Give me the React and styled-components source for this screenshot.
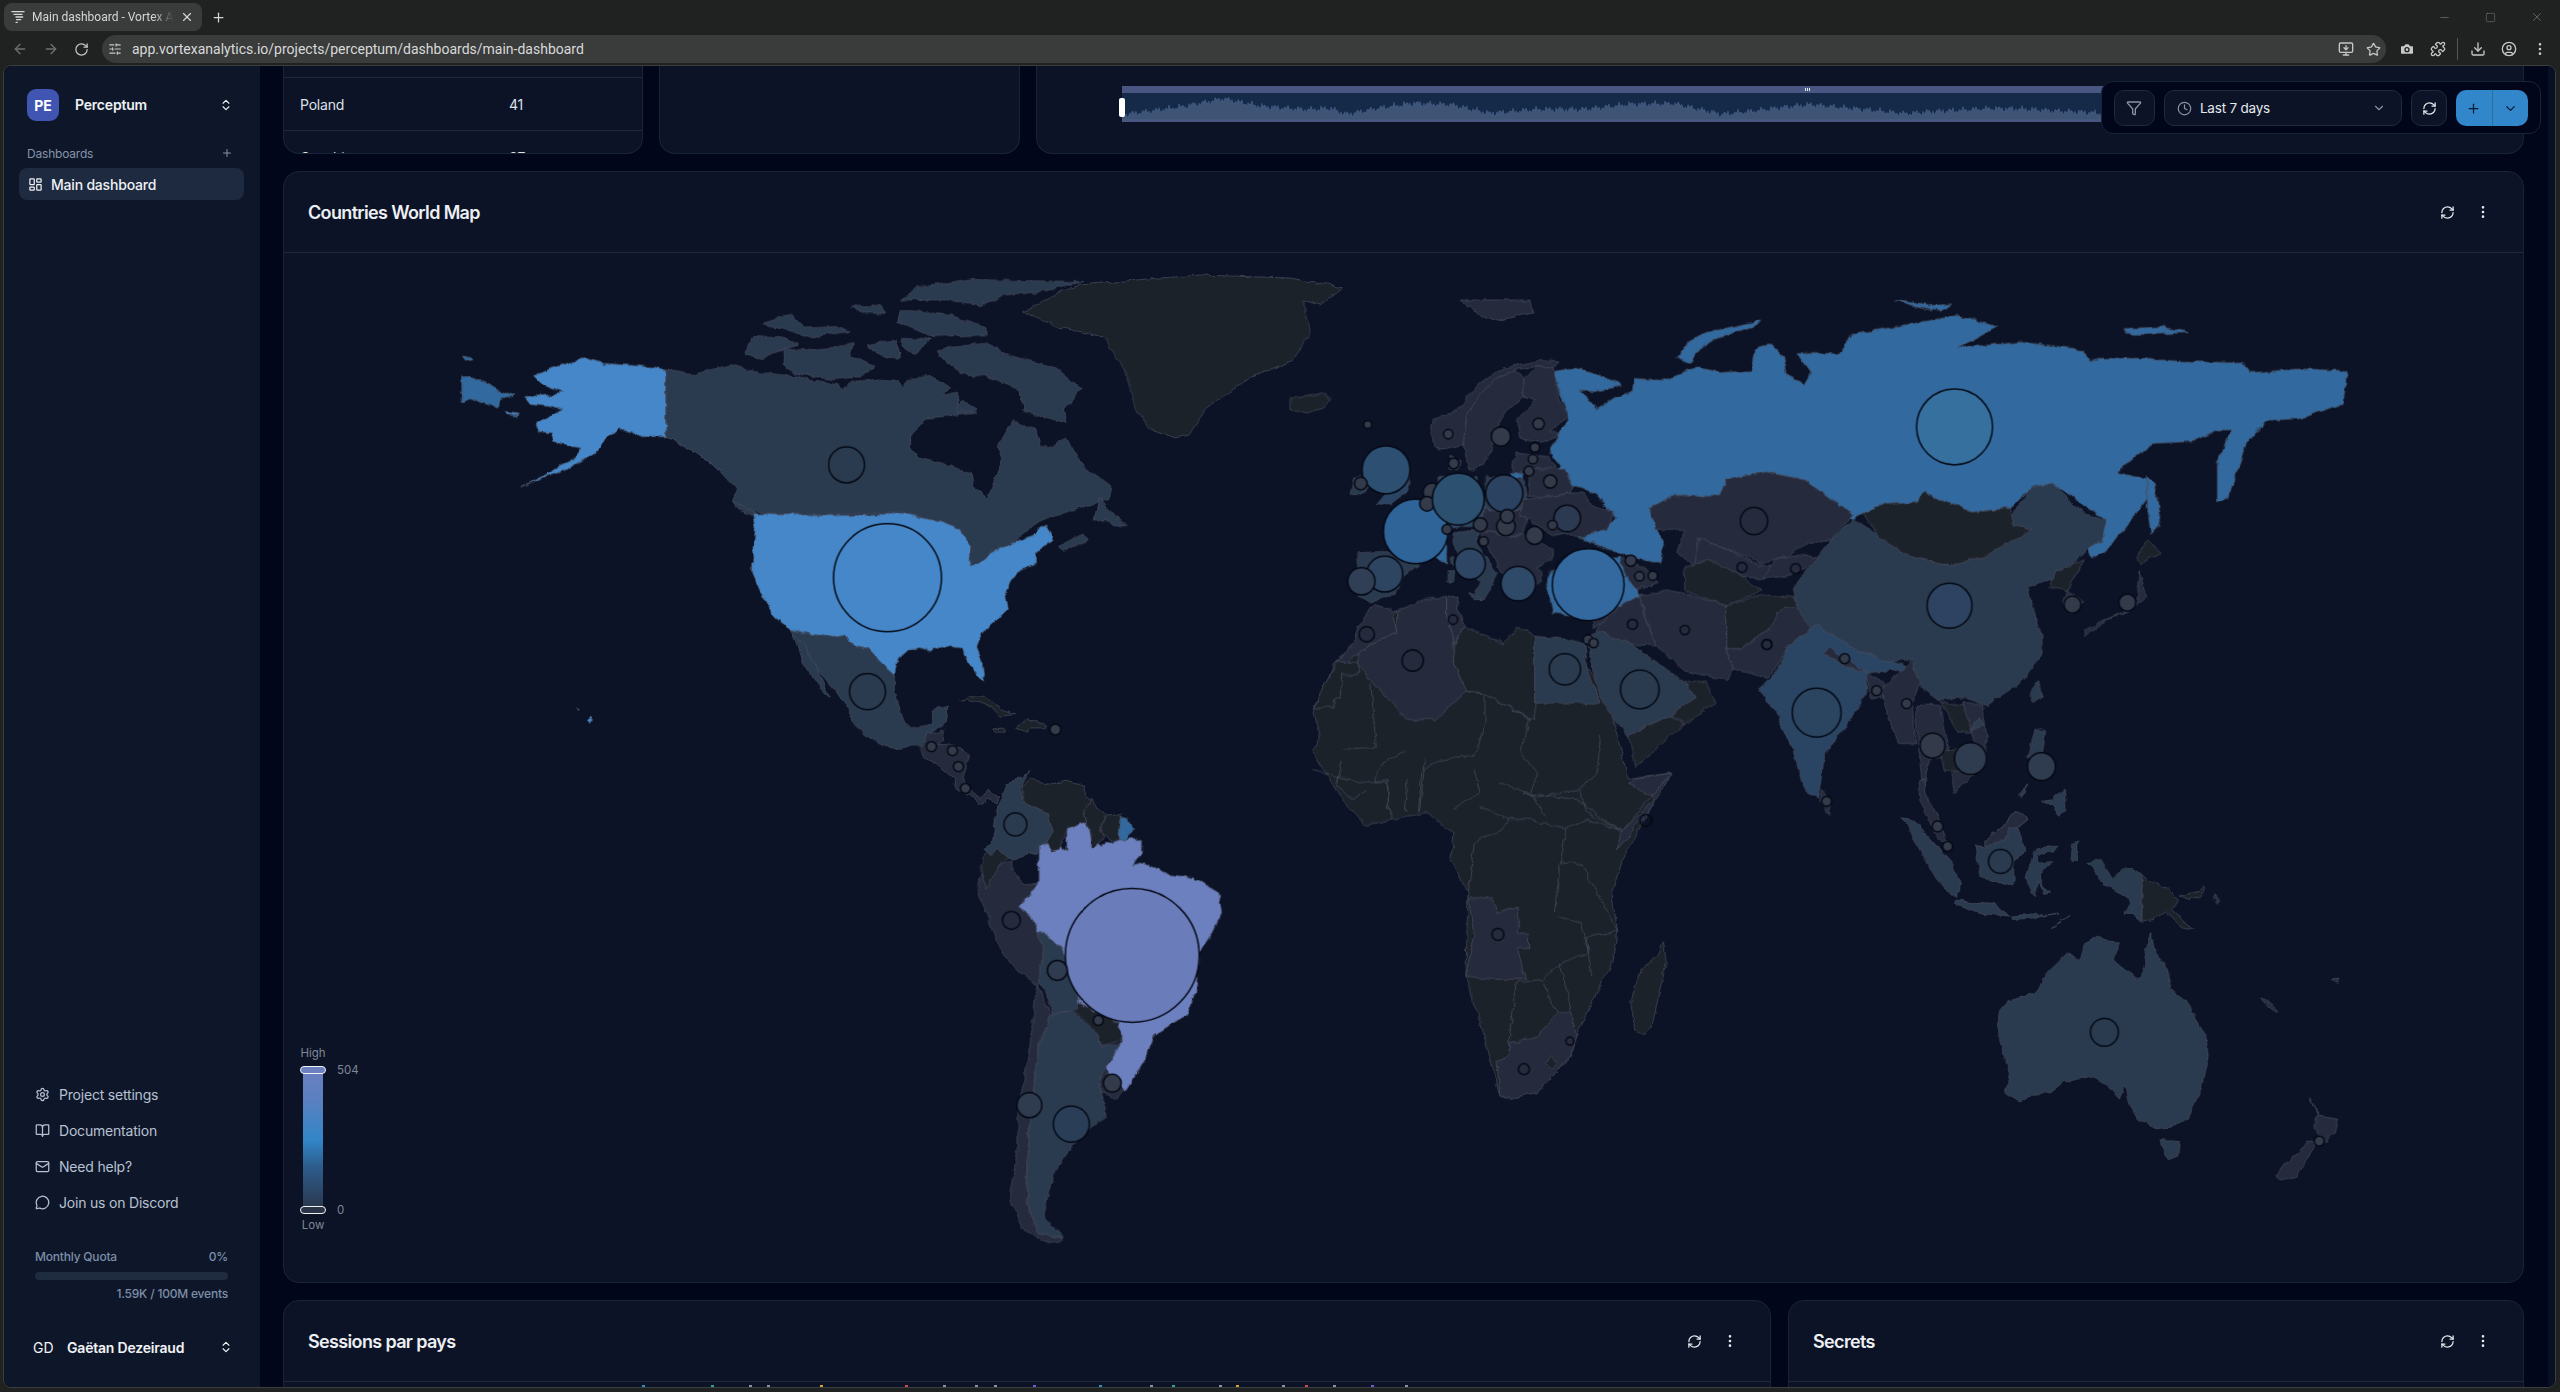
import styled, { createGlobalStyle } from 'styled-components';
import {
  ArrowLeft, ArrowRight, BookOpen, Camera, ChevronDown, ChevronsUpDown, CircleUser, Clock, Download,
  EllipsisVertical, Funnel, LayoutDashboard, Mail, MessageCircle, Minus, MonitorDown, Plus, Puzzle,
  RefreshCw, RotateCw, Settings, SlidersHorizontal, Square, Star, Tornado, X,
} from 'lucide-react';

const GlobalStyle = createGlobalStyle`
  html, body { margin: 0; height: 100%; background: #202221; overflow: hidden; }
  body { font-family: Inter, "Liberation Sans", sans-serif; }
  * { box-sizing: border-box; }
`;

const Page = styled.div`
  height: 100vh;
  display: flex;
  flex-direction: column;
  background: #202221;
`;

/* browser chrome */
const TabStrip = styled.div`
  height: 33px;
  flex: none;
  display: flex;
  align-items: center;
  padding: 1px 0 0 4px;
  color: #d5d6d6;
`;
const Tab = styled.div`
  width: 198px;
  height: 28px;
  background: #3a3b3b;
  border-radius: 8px;
  display: flex;
  align-items: center;
  padding: 0 8px 0 6px;
  gap: 6px;
`;
const TabTitle = styled.span`
  flex: 1;
  font: 12px Roboto, sans-serif;
  white-space: nowrap;
  overflow: hidden;
  -webkit-mask-image: linear-gradient(90deg, #000 85%, transparent);
  mask-image: linear-gradient(90deg, #000 85%, transparent);
`;
const NewTab = styled.div`
  margin-left: 9px;
  display: flex;
`;
const WindowControls = styled.div`
  margin-left: auto;
  padding-right: 16px;
  display: flex;
  align-items: center;
  gap: 34px;
  color: #8b8d8d;
`;
const Toolbar = styled.div`
  height: 32px;
  flex: none;
  display: flex;
  align-items: center;
  padding-left: 12px;
  color: #c6c7c7;
`;
const NavIcon = styled.div`
  display: flex;
  flex: none;
  margin-right: ${p => p.$gap ?? 15}px;
  color: ${p => (p.$dim ? '#6d6f6f' : '#c6c7c7')};
`;
const Omnibox = styled.div`
  width: 2284px;
  flex: none;
  height: 28px;
  margin-right: 13px;
  background: #3a3b3b;
  border-radius: 14px;
  display: flex;
  align-items: center;
  padding: 0 5px 0 6px;
  gap: 10px;
`;
const Url = styled.span`
  flex: 1;
  font: 14px Roboto, sans-serif;
  color: #d8d9d9;
`;
const OmniAction = styled.div`
  display: flex;
  margin-left: 2px;
`;
const ToolbarSep = styled.div`
  width: 1px;
  flex: none;
  height: 22px;
  background: #555757;
  margin: 0 12px 0 -4px;
`;

/* app window */
const AppWindow = styled.div`
  flex: 1;
  min-height: 0;
  margin: 0 4px 4px 3px;
  border: 1px solid #3b3d3f;
  border-radius: 8px;
  overflow: hidden;
  display: flex;
  background: #02061a;
`;

const Sidebar = styled.aside`
  width: 256px;
  flex: none;
  background: #0e1729;
  padding: 23px 27px 24px 23px;
  display: flex;
  flex-direction: column;
`;
const OrgRow = styled.div`
  display: flex;
  align-items: center;
  height: 32px;
  color: #eef1f5;
`;
const OrgAvatar = styled.div`
  width: 32px;
  height: 32px;
  border-radius: 9px;
  background: #4054b2;
  color: #fff;
  font-weight: 700;
  font-size: 14px;
  display: flex;
  align-items: center;
  justify-content: center;
`;
const OrgName = styled.span`
  flex: 1;
  margin-left: 16px;
  font-size: 14px;
  font-weight: 600;
  letter-spacing: -0.2px;
  position: relative;
  top: -1px;
`;
const SectionHead = styled.div`
  margin-top: 24px;
  height: 16px;
  display: flex;
  align-items: center;
  justify-content: space-between;
  font-size: 12px;
  color: #8493a9;
  letter-spacing: -0.2px;
`;
const NavItem = styled.div`
  margin: 7px -11px 0 -8px;
  height: 32px;
  border-radius: 8px;
  background: #1d2a3f;
  display: flex;
  align-items: center;
  gap: 8px;
  padding-left: 9px;
  font-size: 14px;
  font-weight: 500;
  letter-spacing: -0.2px;
  color: #eef1f5;
`;
const Links = styled.div`
  margin-top: auto;
  display: flex;
  flex-direction: column;
`;
const LinkRow = styled.div`
  height: 36px;
  padding-left: 8px;
  display: flex;
  align-items: center;
  gap: 9px;
  font-size: 14px;
  letter-spacing: -0.2px;
  color: #b7c1d1;
`;
const Quota = styled.div`
  margin: 28px 5px 0 8px;
  font-size: 12px;
  font-weight: 500;
  letter-spacing: -0.2px;
  color: #7d8ea8;
`;
const QuotaHead = styled.div`
  height: 16px;
  display: flex;
  justify-content: space-between;
  align-items: center;
`;
const QuotaBar = styled.div`
  height: 8px;
  margin-top: 8px;
  border-radius: 4px;
  background: #1f2b3e;
`;
const QuotaFoot = styled.div`
  margin-top: 6px;
  height: 16px;
  line-height: 16px;
  text-align: right;
`;
const UserRow = styled.div`
  margin-top: 29px;
  height: 32px;
  padding-left: 6px;
  display: flex;
  align-items: center;
  color: #f1f3f6;
`;
const UserInitials = styled.span`
  width: 34px;
  font-size: 14px;
`;
const UserName = styled.span`
  flex: 1;
  font-size: 14px;
  font-weight: 600;
  letter-spacing: -0.2px;
`;

const Main = styled.main`
  flex: 1;
  min-width: 0;
  position: relative;
  overflow: hidden;
  padding: 0 24px 0 23px;
  display: flex;
  flex-direction: column;
  gap: 17px;
`;
const ScrollRail = styled.div`
  width: 7px;
  flex: none;
  background: #0a1024;
`;

const Card = styled.section`
  background: #0c1326;
  border: 1px solid #1a2438;
  border-radius: 16px;
  overflow: hidden;
`;
const TopRow = styled.div`
  height: 88px;
  flex: none;
  display: grid;
  grid-template-columns: 360px 361px 1488px;
  gap: 16px;
`;
const TopCard = styled(Card)`
  border-top: 0;
  border-radius: 0 0 16px 16px;
`;
const TableTop = styled.div`
  height: 12px;
  border-bottom: 1px solid #1f2a3e;
`;
const TableRow = styled.div`
  height: 53px;
  padding: 0 0 0 16px;
  display: grid;
  grid-template-columns: 209px 1fr;
  align-items: center;
  font-size: 14px;
  letter-spacing: -0.2px;
  color: #dce1e9;
  border-bottom: 1px solid #1f2a3e;
`;
const Brush = styled.div`
  position: relative;
  margin: 20px 0 0 85px;
  height: 36px;
`;
const BrushHandle = styled.div`
  position: absolute;
  left: -3px;
  top: 12px;
  width: 6px;
  height: 19px;
  border-radius: 2px;
  background: #fff;
`;
const WorldCard = styled(Card)`
  height: 1112px;
  flex: none;
  display: flex;
  flex-direction: column;
`;
const CardHead = styled.header`
  height: 81px;
  flex: none;
  display: flex;
  align-items: center;
  padding: 0 32px 0 24px;
  gap: 20px;
  border-bottom: 1px solid #1f2a3e;
  color: #e6e9ee;
`;
const CardTitle = styled.h2`
  flex: 1;
  margin: 0;
  font-size: 18px;
  font-weight: 600;
  letter-spacing: -0.65px;
  color: #eceff3;
`;
const MapBody = styled.div`
  position: relative;
  flex: 1;
  min-height: 0;
`;
const MapSvg = styled.svg`
  display: block;
  width: 100%;
  height: 100%;
  polygon, polyline {
    vector-effect: non-scaling-stroke;
    stroke: #4a5060;
    stroke-width: 0.7px;
    stroke-linejoin: round;
  }
  polyline { fill: none; }
  circle {
    vector-effect: non-scaling-stroke;
    stroke: #050914;
    stroke-width: 1.5px;
  }
`;
const Legend = styled.div`
  position: absolute;
  left: 14px;
  top: 793px;
  width: 70px;
  display: flex;
  flex-direction: column;
  font-size: 11.5px;
  color: #7e8796;
`;
const LegendLabel = styled.div`
  width: 30px;
  height: 14px;
  line-height: 14px;
  text-align: center;
`;
const LegendBar = styled.div`
  position: relative;
  width: 20px;
  height: 146px;
  margin: 7px 0 5px 5px;
  background: linear-gradient(#6c80c0 0%, #5b80c0 22%, #3286c8 50%, #2d5d8d 68%, #2b3347 100%);
`;
const LegendThumb = styled.div`
  position: absolute;
  left: -3px;
  ${p => (p.$top ? 'top: -1px;' : 'bottom: -1px;')}
  width: 26px;
  height: 8px;
  border: 1.5px solid #f1f3f6;
  border-radius: 4px;
  background: ${p => (p.$top ? '#6c80c0' : '#2b3347')};
`;
const LegendValue = styled.span`
  position: absolute;
  left: 34px;
  ${p => (p.$top ? 'top: -4px;' : 'bottom: -4px;')}
`;
const BottomRow = styled.div`
  display: grid;
  flex: none;
  grid-template-columns: 1488px 736px;
  gap: 17px;
`;
const BottomCard = styled(Card)`
  height: 200px;
`;
const ClippedChart = styled.svg`
  display: block;
`;
const FilterBar = styled.div`
  position: absolute;
  top: 15px;
  right: 7px;
  width: 440px;
  height: 53px;
  padding: 8px 12px;
  display: flex;
  gap: 9px;
  background: #02061a;
  border: 1px solid #1a2438;
  border-radius: 12px;
  color: #aab2bf;
`;
const GhostButton = styled.div`
  width: ${p => p.$w}px;
  height: 36px;
  display: flex;
  align-items: center;
  justify-content: center;
  background: #0c1326;
  border: 1px solid #1f2a3e;
  border-radius: 10px;
  color: ${p => (p.$light ? '#e6e9ee' : '#8a92a0')};
`;
const RangeSelect = styled.div`
  width: 239px;
  height: 36px;
  padding: 0 15px 0 12px;
  display: flex;
  align-items: center;
  gap: 8px;
  background: #0c1326;
  border: 1px solid #1f2a3e;
  border-radius: 10px;
  color: #8a92a0;
`;
const RangeText = styled.span`
  flex: 1;
  font-size: 13.5px;
  letter-spacing: -0.2px;
  color: #e6e9ee;
`;
const SplitButton = styled.div`
  width: 72px;
  height: 36px;
  display: flex;
  border-radius: 10px;
  overflow: hidden;
  background: #3286ca;
  color: #0a1a30;
`;
const SplitPart = styled.div`
  flex: 1;
  display: flex;
  align-items: center;
  justify-content: center;
  & + & { border-left: 1px solid #2a6ea6; }
`;

/* map data, traced in the pixel grid of a crop and placed back with a transform */
const COLORS = {
  none: '#1e222b',
  low: '#262b3d',
  mid: '#2b3a50',
  ind: '#2c4563',
  ru: '#33699f',
  us: '#4587c9',
  br: '#6c80c0',
};

const NORTH_AMERICA = [
  ['us', '520,360 500,352 440,345 395,340 360,325 325,340 295,355 260,378 275,400 300,415 320,428 295,435 245,440 258,465 290,470 315,480 290,498 265,520 270,545 295,550 300,575 330,590 355,595 340,625 300,660 275,680 235,712 285,680 330,655 380,610 410,560 425,540 450,545 470,560 520,565 545,580 570,600 600,630 630,670 633,645 600,600 575,570 540,560 520,555'],
  ['ru', '119,375 160,395 190,420 222,438 195,450 190,472 160,460 140,445 120,458'],
  ['ru', '119,322 135,322 145,330 125,335'],
  ['us', '370,1400 378,1410 372,1422 365,1412'],
  ['us', '345,1375 352,1378 350,1385'],
  ['us', '205,488 232,492 230,498 210,496'],
  ['mid', '520,360 570,375 610,358 650,345 680,358 720,370 780,380 810,395 860,405 865,425 880,395 930,390 970,395 985,410 1000,385 1040,380 1080,410 1065,440 1090,430 1095,470 1130,490 1065,500 1030,505 1000,560 1000,590 1015,625 1060,640 1120,670 1125,710 1150,750 1165,690 1180,630 1170,590 1200,515 1245,540 1255,590 1280,590 1305,560 1340,650 1395,710 1390,745 1350,765 1310,785 1250,815 1205,875 1165,905 1130,940 1115,945 1120,890 1095,840 1060,815 1025,805 990,790 710,793 680,780 650,755 660,720 640,690 630,670 600,630 570,600 545,580 520,565'],
  ['mid', '1090,290 1150,280 1200,320 1280,350 1335,420 1300,480 1305,520 1260,500 1220,480 1215,420 1160,385 1120,375 1095,370 1050,300'],
  ['mid', '750,300 800,300 860,290 890,280 880,320 930,350 900,380 850,390 770,370 750,340'],
  ['mid', '690,260 750,265 780,285 730,310 710,330 675,310'],
  ['mid', '1030,110 1120,90 1340,95 1250,125 1180,140 1140,165 1070,150 980,150 1010,115'],
  ['mid', '980,180 1060,190 1150,235 1150,255 1040,260 975,215'],
  ['mid', '710,220 770,195 790,235 860,230 880,245 800,262 760,240'],
  ['mid', '885,165 940,170 950,190 900,190'],
  ['mid', '980,265 1040,270 1010,310 985,300'],
  ['mid', '915,285 970,270 980,320 950,325'],
  ['mid', '1100,450 1130,480 1090,490'],
  ['mid', '1370,740 1395,790 1425,830 1400,825 1380,810 1360,815'],
  ['mid', '1290,890 1340,850 1350,870 1300,905'],
  ['mid', '650,755 690,780 700,805 670,785'],
  ['us', '690,795 990,793 1025,805 1060,815 1095,840 1120,890 1115,945 1130,940 1165,905 1205,878 1240,860 1255,830 1270,830 1280,875 1245,905 1245,945 1210,965 1195,1000 1185,1040 1190,1080 1170,1110 1140,1150 1130,1190 1140,1240 1145,1295 1135,1290 1115,1240 1100,1195 1060,1190 1040,1205 1005,1195 975,1225 968,1278 940,1240 915,1200 890,1190 870,1160 855,1165 820,1162 790,1150 765,1140 735,1105 710,1040 690,970 690,905 695,840'],
  ['mid', '765,1140 790,1150 855,1165 870,1160 890,1190 915,1200 940,1240 968,1278 968,1330 985,1410 1000,1435 1040,1425 1045,1380 1075,1370 1070,1420 1040,1450 1040,1470 1030,1490 1000,1490 980,1500 950,1490 910,1460 885,1420 880,1380 850,1320 800,1230'],
  ['mid', '770,1150 790,1180 810,1240 843,1340 820,1310 790,1240'],
];

const CARIBBEAN = [
  ['low', '430,255 440,220 478,220 490,205 485,245 470,255 510,255 545,262 565,285 555,330 545,365 570,395 600,415 625,392 655,415 650,430 620,415 605,438 575,415 555,405 525,385 520,355 470,312 430,295 420,270'],
  ['none', '540,130 570,108 610,110 660,145 705,165 655,170 640,150 600,130 560,122'],
  ['none', '705,205 740,178 795,195 790,205 745,205 742,218'],
  ['none', '640,208 670,205 672,217 650,218'],
  ['mid', '745,333 725,355 680,370 665,420 650,440 635,555 610,570 630,585 655,570 690,600 770,580 770,560 800,550 815,520 805,465 730,430 720,390'],
  ['none', '750,355 790,375 860,365 910,380 915,410 935,425 910,460 920,490 860,510 840,570 815,575 800,550 815,520 805,465 730,430 725,385'],
  ['none', '935,415 950,445 975,470 960,510 970,540 935,565 930,510 920,490 910,460'],
  ['none', '975,470 1020,465 1017,540 990,545 960,520'],
  ['ru', '1020,470 1040,480 1060,510 1035,545 1017,540'],
];

const SOUTH_AND_AFRICA = [
  ['br', '325,215 335,270 350,290 380,270 420,270 420,310 405,350 425,340 470,375 510,385 555,430 560,490 540,560 520,610 515,730 500,795 440,860 430,920 390,1030 355,950 385,880 380,820 345,790 310,760 305,680 280,600 250,550 235,550 230,510 205,470 220,410 240,400 240,285 265,280 290,300 290,235'],
  ['low', '140,370 190,335 210,400 240,405 205,470 230,510 240,550 250,600 248,700 238,705 200,655 170,590 145,470 135,425'],
  ['none', '145,315 175,295 190,320 170,350 150,420 140,360'],
  ['mid', '240,555 250,550 280,600 305,680 310,755 310,780 265,795 250,720 240,690 250,600'],
  ['none', '310,760 345,790 380,820 385,870 350,895 345,860 305,785'],
  ['low', '352,955 390,1020 375,1050 345,1030'],
  ['low', '238,705 262,795 240,900 225,1130 220,1350 240,1450 285,1470 260,1485 210,1440 190,1340 205,1200 205,1090 225,900'],
  ['mid', '262,795 300,785 345,860 350,895 385,880 360,950 345,1000 360,1100 330,1135 295,1200 265,1280 250,1400 285,1470 240,1450 220,1350 225,1130 240,900'],
];

const AFRICA_SOUTH = [
  ['low', '990,445 1030,445 1040,490 1075,470 1078,550 1095,555 1095,595 1075,595 1090,690 1030,690 985,680 1000,560'],
  ['low', '1060,880 1075,880 1110,860 1145,790 1170,790 1178,860 1170,920 1110,1030 1060,1048 1045,1040 1040,940 1060,920'],
  ['none', '1135,922 1146,940 1135,962 1126,945'],
  ['low', '1345,70 1310,170 1250,300 1255,250 1315,150 1270,100 1280,90'],
  ['none', '1330,575 1335,640 1310,830 1295,857 1280,840 1273,760 1290,660 1320,620'],
];
const AFRICA_SOUTH_BORDERS = [
  '850,90 850,180', '885,90 880,190', '915,30 905,180', '965,180 1010,130 1000,60',
  '1010,170 1060,210 1050,240 1000,280 990,430', '1060,210 1100,210 1160,240 1200,210 1255,245',
  '1160,240 1150,340 1140,490', '1185,340 1250,545', '1150,340 1190,345', '1250,545 1195,565 1205,680',
  '1145,500 1185,520 1200,610 1155,640 1120,690 1075,700 1060,880', '1150,640 1170,790', '1120,700 1145,790',
  '1085,130 1180,150 1250,240', '770,30 760,110 790,150 810,120', '720,60 800,100 850,90',
];

const AFRICA_OUTLINE = '1334,664 1313,709 1320,736 1313,753 1338,794 1366,826 1405,817 1428,813 1445,827 1454,833 1451,860 1468,893 1466,977 1486,1043 1500,1097 1509,1099 1537,1093 1572,1057 1576,1037 1612,963 1618,933 1612,893 1622,863 1652,807 1672,773 1629,780 1621,750 1605,690 1590,670 1535,675 1500,640 1480,640 1415,620 1400,640 1400,610 1375,625';

const NORTH_AFRICA = [
  ['low', '250,705 305,720 320,790 270,810 205,850 170,880 140,878 185,830 205,770'],
  ['low', '320,725 400,690 470,680 470,740 490,800 490,880 530,965 440,1050 350,1050 205,890 205,850 270,810 320,790'],
  ['low', '470,680 505,680 500,720 525,770 495,825 490,800 470,740'],
  ['none', '525,770 590,800 640,825 680,770 735,800 735,1050 575,970 530,965 490,880 495,825'],
  ['mid', '735,800 850,810 885,820 890,870 880,860 930,1000 735,1000'],
  ['none', '140,878 205,878 205,915 155,915 150,985 135,985 130,1015 72,1015 95,960'],
];

const EUROPE = [
  ['low', '700,80 740,90 720,110 680,150 690,205 760,215 810,195 780,180 835,145 810,90 795,20 790,-5 745,-10 705,25'],
  ['low', '705,25 700,80 650,120 620,170 610,230 580,285 540,300 520,230 530,140 560,90 610,30 670,0'],
  ['low', '670,0 610,30 560,90 530,140 520,225 470,240 440,240 420,190 430,150 500,120 555,55 620,5 680,-15 760,-30 810,-27 790,-5 745,-10'],
  ['low', '480,260 510,270 505,300 480,295'],
  ['ind', '290,230 360,300 355,350 345,370 300,400 255,410 290,370 290,330 270,300'],
  ['mid', '190,325 235,325 240,355 200,380 180,375'],
  ['none', '0,85 50,80 90,70 125,90 100,115 50,130 0,120'],
  ['ru', '380,390 470,470 470,580 280,480'],
  ['mid', '200,550 280,545 390,585 340,620 320,670 240,700 205,680 205,620'],
  ['ind', '450,320 560,320 590,420 560,470 460,470'],
  ['mid', '590,320 700,330 715,410 640,430 590,420'],
  ['mid', '490,490 570,480 560,520 620,610 600,660 580,690 555,670 570,640 510,570 490,520'],
  ['mid', '540,665 580,690 550,690'],
  ['mid', '475,600 495,600 490,640 475,640'],
  ['mid', '480,565 495,565 490,590'],
  ['low', '570,480 660,500 700,490 790,540 790,570 740,590 760,610 730,660 700,680 640,620 600,540'],
  ['low', '590,420 715,420 700,490 660,500 570,480 560,470'],
  ['low', '700,390 780,380 840,370 880,370 905,405 970,425 960,470 905,490 880,510 840,490 790,500 720,450 690,440'],
  ['low', '720,300 820,295 850,350 840,370 780,380 715,380'],
  ['low', '680,250 770,260 800,290 720,300 670,310 670,280'],
  ['ru', '790,600 880,570 990,560 1040,620 1045,680 990,710 870,740 790,730 770,640'],
  ['low', '990,560 1075,600 1105,640 1040,660 1000,610'],
  ['ru', '660,308 700,308 700,325 665,322'],
];

const ASIA = [
  ['ru', '432,190 460,180 500,195 530,225 490,240 470,235 495,285 520,255 545,240 548,205 590,210 640,175 670,190 715,185 720,125 745,115 760,150 765,195 790,220 800,190 780,140 840,140 860,90 920,70 1010,40 1065,70 1010,125 1100,110 1190,130 1195,155 1280,155 1330,160 1415,165 1425,190 1500,180 1565,185 1560,270 1500,310 1450,315 1420,380 1395,520 1380,530 1380,420 1400,340 1380,340 1345,370 1290,375 1235,450 1280,470 1280,520 1225,650 1200,675 1195,640 1222,575 1145,480 1115,490 1085,545 1030,555 960,510 950,530 880,555 860,575 790,470 735,450 680,470 670,510 600,515 570,545 590,640 585,690 560,680 510,650 470,625 470,590 510,600 520,570 495,510 430,460 445,430 425,400 455,310'],
  ['ru', '730,52 700,65 650,85 625,110 610,150 630,165 640,130 665,100 725,65'],
  ['ru', '920,0 970,15 1000,10 985,30 940,15'],
  ['ru', '1245,75 1300,70 1340,85 1290,90 1250,90'],
  ['ru', '1280,460 1290,480 1300,590 1285,610 1280,540'],
  ['low', '570,545 600,515 670,510 680,470 735,450 790,470 860,560 830,625 790,640 770,670 730,690 680,650 640,625 640,650 635,700 610,660 620,600 600,600 580,600'],
  ['low', '640,625 680,650 720,690 750,700 730,730 695,720 650,680 635,690'],
  ['none', '620,700 650,680 700,720 730,760 680,800 620,760'],
  ['low', '750,680 790,665 820,680 770,720 730,730'],
  ['none', '680,800 730,770 790,780 760,830 740,860 700,915 680,915'],
  ['low', '680,915 700,915 740,860 760,800 790,810 810,850 770,900 740,990 690,965'],
  ['low', '555,770 600,760 625,770 680,800 680,915 690,965 680,995 620,970 580,905 570,860'],
  ['low', '510,800 540,780 555,770 570,860 580,905 540,900 495,865'],
  ['low', '485,800 540,780 510,830 490,860'],
  ['mid', '480,890 495,865 540,895 590,960 620,1000 635,1040 600,1085 540,1140 515,1090 500,1040'],
  ['none', '540,1140 600,1085 620,1110 550,1220'],
  ['none', '635,1040 620,1000 650,1000 665,1050 620,1110 600,1085'],
  ['mid', '775,755 830,625 860,575 900,620 940,670 1000,695 1050,670 1090,605 1085,570 1115,490 1145,480 1190,560 1222,575 1215,630 1195,650 1180,680 1145,730 1110,750 1115,800 1130,880 1130,925 1100,1000 1050,1060 1020,1040 980,1045 950,1000 940,940 900,950 850,910 800,860 780,800'],
  ['none', '875,560 900,535 950,530 960,505 1030,555 1085,545 1090,590 1115,600 1050,670 1000,695 940,670 900,625'],
  ['ind', '770,900 810,850 870,920 950,965 880,975 880,1020 870,1060 820,1190 810,1305 790,1280 775,1180 750,1075 725,1020 745,990'],
  ['low', '825,905 855,945 880,970 850,960 818,925'],
  ['low', '880,975 905,1000 905,1040 885,1040'],
  ['low', '900,1020 945,940 955,1000 945,1060 950,1160 925,1160 905,1060'],
  ['low', '950,1060 985,1060 990,1110 1000,1200 970,1195 960,1290 955,1190 950,1090'],
  ['none', '985,1050 1020,1060 1040,1130 1010,1130'],
  ['low', '1015,1050 1045,1060 1050,1120 1050,1210 1005,1290 1000,1240 1035,1150'],
  ['none', '985,1180 1040,1170 1020,1230 990,1230'],
  ['none', '1150,710 1190,680 1165,760 1140,750'],
  ['low', '1165,760 1190,790 1170,820 1160,790'],
  ['low', '1270,710 1278,780 1240,820 1190,860 1190,880 1220,840 1265,800'],
  ['none', '1280,630 1300,660 1270,690 1265,670'],
  ['low', '815,1280 828,1310 825,1345 813,1310'],
  ['mid', '1125,995 1130,1040 1115,1050 1115,1020'],
  ['mid', '1040,1090 1048,1110 1030,1125'],
  ['mid', '1120,1120 1135,1130 1130,1190 1110,1200'],
];

const OCEANIA = [
  ['mid', '70,115 100,120 160,190 215,250 240,300 235,350 215,350 160,280 100,170'],
  ['low', '120,0 135,0 135,40 170,100 205,190 175,180 150,120 120,60'],
  ['mid', '285,195 320,210 320,180 380,130 410,90 445,120 415,145 440,210 405,250 400,310 375,318 305,295'],
  ['low', '320,205 320,180 380,130 410,90 445,120 415,145 390,145 375,180'],
  ['mid', '230,360 280,370 340,375 390,410 330,405 270,390 225,375'],
  ['mid', '395,410 440,405 480,410 540,400 470,415 400,420'],
  ['mid', '515,445 575,405 530,435'],
  ['mid', '455,240 470,205 540,200 525,220 470,225 475,250 515,250 480,280 490,320 510,340 490,345 475,310 465,350 440,300'],
  ['mid', '580,190 595,185 595,245 575,245'],
  ['mid', '625,250 665,240 685,275 700,300 740,262 788,287 788,425 760,405 735,405 755,365 690,320 660,300 645,265'],
  ['none', '788,287 860,325 895,360 880,390 940,450 900,440 860,395 825,420 788,425'],
  ['none', '900,350 960,335 975,320 965,355 930,360'],
  ['mid', '490,65 520,60 555,30 560,90 540,110 520,80'],
  ['mid', '415,50 445,15 425,55'],
  ['mid', '360,695 385,665 470,640 500,585 530,555 565,520 600,545 620,490 655,470 720,490 700,545 750,580 780,600 795,560 810,455 835,535 855,550 875,625 915,660 945,715 980,770 987,830 965,930 925,1020 875,1045 830,1045 775,1020 750,970 738,915 720,960 680,915 630,892 550,910 510,942 460,945 420,968 380,945 390,880 365,800 355,740'],
  ['mid', '845,1085 900,1085 895,1135 870,1145 855,1125'],
  ['low', '1290,955 1320,1010 1375,1020 1365,1060 1340,1090 1305,1050 1320,1005'],
  ['low', '1285,1085 1310,1090 1290,1130 1250,1195 1210,1205 1190,1190 1220,1150 1260,1120'],
  ['low', '1150,655 1195,695 1190,700 1155,670'],
  ['low', '1360,600 1380,600 1375,612'],
  ['low', '1000,340 1020,370 1015,375 1000,350'],
];

const SMALL = '#333a49';
const EUROPE_BUBBLES = [
  [233, 164, 12, SMALL], [475, 193, 14, SMALL], [491, 281, 16, SMALL], [633, 200, 29, SMALL], [746, 162, 17, SMALL],
  [735, 233, 14, SMALL], [729, 268, 14, SMALL], [717, 304, 15, SMALL], [781, 335, 20, SMALL], [288, 300, 72, '#2d5072'],
  [212, 341, 19, SMALL], [377, 485, 97, '#2f6498'], [426, 367, 27, SMALL], [411, 402, 22, SMALL], [505, 388, 78, '#2b5070'],
  [643, 371, 56, '#2b4260'], [648, 470, 28, SMALL], [652, 440, 21, SMALL], [571, 465, 21, SMALL], [471, 479, 15, SMALL],
  [581, 515, 14, SMALL], [734, 497, 27, SMALL], [832, 446, 40, '#2b3a50'], [788, 466, 14, SMALL], [284, 613, 54, '#2e4561'],
  [214, 635, 41, '#303f56'], [540, 583, 46, '#2e4563'], [685, 642, 52, '#2f4a68'], [895, 645, 108, '#33699f'],
  [1023, 573, 17, SMALL], [1049, 620, 14, SMALL], [1089, 618, 14, SMALL], [1393, 454, 41, 'none'], [1357, 593, 15, 'none'],
  [489, 750, 14, 'none'], [230, 794, 23, 'none'], [368, 873, 32, 'none'], [1028, 764, 15, 'none'], [1185, 781, 14, 'none'],
  [1432, 824, 15, 'none'], [894, 810, 14, SMALL], [911, 820, 14, SMALL], [825, 899, 47, 'none'], [1050, 960, 58, 'none'],
];
const WORLD_BUBBLES = [
  [1955, 427, 38, '#35709f'], [1817, 713, 24.5, '#2b4460'], [1950, 606, 22.5, '#2d4361'], [2073, 605, 8.5, SMALL],
  [2128, 603, 8.5, SMALL], [1971, 759, 16, '#2f3b4f'], [1933, 746, 12.5, SMALL], [2042, 767, 14, '#2f3b4f'],
  [1845, 659, 5, SMALL], [1877, 691, 5, SMALL], [1907, 704, 5, SMALL], [1827, 802, 5, SMALL], [1796, 569, 5, 'none'],
  [1767, 645, 5, 'none'], [1646, 821, 6, 'none'], [1498, 935, 6, 'none'], [1524, 1070, 5.5, 'none'], [1570, 1042, 4, 'none'],
  [1938, 827, 5.5, SMALL], [1948, 847, 5, SMALL], [2001, 862, 12, 'none'], [2105, 1033, 14, 'none'], [2320, 1142, 5, SMALL],
  [846, 465, 18, 'none'], [887, 578, 54, 'none'], [867, 692, 18, 'none'], [931, 747, 5, SMALL], [952, 751, 5, SMALL],
  [958, 767, 5, SMALL], [965, 789, 5, SMALL], [1055, 730, 5.5, SMALL], [1015, 825, 11.5, 'none'], [1011, 921, 9, 'none'],
  [1132, 956, 67, '#6a7cba'], [1057, 971, 10, '#2f3b4f'], [1098, 1021, 5, SMALL], [1112, 1084, 9, SMALL], [1029, 1106, 12.5, '#2f3b4f'],
  [1071, 1125, 18, '#2b3e58'],
];

const Shapes = ({ transform, items }) => (
  <g transform={transform}>
    {items.map(([color, points], i) => (
      <polygon key={i} points={points} fill={COLORS[color]} />
    ))}
  </g>
);

const Bubbles = ({ transform, items }) => (
  <g transform={transform}>
    {items.map(([cx, cy, r, fill], i) => (
      <circle key={i} cx={cx} cy={cy} r={r} fill={fill} />
    ))}
  </g>
);

const Z5 = 'translate(400 250) scale(0.5102 0.3333)';
const Z6 = 'translate(1250 300) scale(0.7015 0.3827)';
const Z7 = 'translate(900 750) scale(0.5742 0.3333)';
const Z9 = 'translate(1290 370) scale(0.3333)';
const Z10 = 'translate(1880 780) scale(0.3333)';
const Z11 = 'translate(780 660) scale(0.3333)';

const AFRICA_Z6_BORDERS = [
  '172,1000 180,1170 130,1175', '245,1105 270,1060 310,1025 335,1030 400,1095 405,1055',
  '400,1095 385,1180 410,1240 400,1290 420,1350', '335,1030 335,1120 320,1190 265,1205 245,1235 240,1340',
  '220,1180 190,1210 175,1260 195,1260 200,1360', '500,1140 495,1240 470,1280 410,1300 355,1260',
  '470,1280 480,1340 530,1390 600,1240',
];

const WorldMap = () => (
  <MapSvg viewBox="283 253 2241 1030" preserveAspectRatio="none">
    <defs>
      <filter id="coast" x="283" y="253" width="2241" height="1030" filterUnits="userSpaceOnUse">
        <feTurbulence type="fractalNoise" baseFrequency="0.09" numOctaves="3" seed="7" />
        <feDisplacementMap in="SourceGraphic" scale="6" xChannelSelector="R" yChannelSelector="G" />
      </filter>
    </defs>
    <g filter="url(#coast)">
      <polygon points="1022,312 1060,292 1080,285 1135,280 1200,275 1290,278 1342,288 1320,305 1302,300 1310,332 1292,361 1250,378 1225,395 1205,410 1190,435 1175,438 1150,430 1135,407 1124,370 1104,337 1058,327 1028,315" fill={COLORS.none} />
      <polygon points="1460,300 1530,300 1534,313 1495,321 1473,310" fill={COLORS.low} />
      <Shapes transform={Z5} items={NORTH_AMERICA} />
      <Shapes transform={Z7} items={SOUTH_AND_AFRICA} />
      <Shapes transform={Z11} items={CARIBBEAN} />
      <polygon points={AFRICA_OUTLINE} fill={COLORS.none} />
      <Shapes transform={Z7} items={AFRICA_SOUTH} />
      <g transform={Z7}>
        {AFRICA_SOUTH_BORDERS.map(p => <polyline key={p} points={p} />)}
      </g>
      <g transform={Z6}>
        {AFRICA_Z6_BORDERS.map(p => <polyline key={p} points={p} />)}
      </g>
      <Shapes transform={Z9} items={NORTH_AFRICA} />
      <Shapes transform={Z6} items={ASIA} />
      <Shapes transform={Z9} items={EUROPE} />
      <Shapes transform={Z10} items={OCEANIA} />
    </g>
    <Bubbles transform={Z9} items={EUROPE_BUBBLES} />
    <Bubbles items={WORLD_BUBBLES} />
  </MapSvg>
);

const WAVE_ENVELOPE = [
  [0, 6], [9, 8], [63, 15], [101, 23], [139, 15], [185, 12], [208, 13], [224, 7], [254, 13], [291, 18],
  [329, 17], [367, 8], [413, 12], [459, 12], [507, 17], [552, 18], [599, 7], [644, 12], [690, 17],
  [729, 13], [783, 8], [866, 13], [912, 12], [980, 8], [1000, 6],
];

const waveHeight = x => {
  let i = 0;
  while (i < WAVE_ENVELOPE.length - 2 && WAVE_ENVELOPE[i + 1][0] < x) i++;
  const [x0, y0] = WAVE_ENVELOPE[i];
  const [x1, y1] = WAVE_ENVELOPE[i + 1];
  const base = y0 + ((y1 - y0) * (x - x0)) / (x1 - x0);
  const noise = Math.sin(x * 1.9) * 1.7 + Math.sin(x * 3.1 + 1) * 1.2 + Math.sin(x * 0.53 + 2) * 1.6;
  return Math.max(2, base + noise - 2);
};

const wavePoints = () => {
  const pts = ['0,34'];
  for (let x = 0; x <= 1000; x += 1) pts.push(`${x},${(34 - waveHeight(x)).toFixed(1)}`);
  pts.push('1000,34');
  return pts.join(' ');
};

const Waveform = () => (
  <svg width="1000" height="36" viewBox="0 0 1000 36">
    <rect width="1000" height="7" fill="#4a5682" />
    <rect y="7" width="1000" height="27" fill="#152a48" />
    <polygon points={wavePoints()} fill="#3f5474" stroke="#4a6590" strokeWidth="0.6" />
    <rect y="34" width="1000" height="2" fill="#4a5682" />
    <rect x="683" y="2" width="1" height="3" fill="#e6e9ee" />
    <rect x="685" y="2" width="1" height="3" fill="#e6e9ee" />
    <rect x="687" y="2" width="1" height="3" fill="#e6e9ee" />
  </svg>
);

const LEGEND_DOTS = [
  [358, '#2f8fb8'], [427, '#2fa58a'], [465, '#8a92a0'], [483, '#8a92a0'], [536, '#d9a32b'], [621, '#d04a4a'],
  [659, '#8a92a0'], [691, '#8a92a0'], [710, '#8a92a0'], [749, '#6a5cd0'], [815, '#2f8fb8'], [866, '#8a92a0'],
  [888, '#2fa58a'], [935, '#8a92a0'], [952, '#d9a32b'], [998, '#8a92a0'], [1021, '#d04a4a'], [1049, '#8a92a0'],
  [1087, '#6a5cd0'], [1121, '#8a92a0'],
];

const CardActions = () => (
  <>
    <RefreshCw size={15} />
    <EllipsisVertical size={16} />
  </>
);

export default function App() {
  return (
    <Page>
      <GlobalStyle />
      <TabStrip>
        <Tab>
          <Tornado size={16} />
          <TabTitle>Main dashboard - Vortex Analytics</TabTitle>
          <X size={14} />
        </Tab>
        <NewTab><Plus size={15} /></NewTab>
        <WindowControls>
          <Minus size={13} strokeWidth={1} />
          <Square size={11} strokeWidth={1} />
          <X size={14} strokeWidth={1} />
        </WindowControls>
      </TabStrip>
      <Toolbar>
        <NavIcon $dim><ArrowLeft size={16} /></NavIcon>
        <NavIcon $dim><ArrowRight size={16} /></NavIcon>
        <NavIcon $gap={13}><RotateCw size={15} /></NavIcon>
        <Omnibox>
          <SlidersHorizontal size={14} />
          <Url>app.vortexanalytics.io/projects/perceptum/dashboards/main-dashboard</Url>
          <OmniAction><MonitorDown size={16} /></OmniAction>
          <OmniAction><Star size={15} /></OmniAction>
        </Omnibox>
        <NavIcon><Camera size={16} fill="#c6c7c7" stroke="#202221" /></NavIcon>
        <NavIcon><Puzzle size={16} /></NavIcon>
        <ToolbarSep />
        <NavIcon><Download size={16} /></NavIcon>
        <NavIcon><CircleUser size={16} /></NavIcon>
        <NavIcon $gap={0}><EllipsisVertical size={16} /></NavIcon>
      </Toolbar>

      <AppWindow>
        <Sidebar>
          <OrgRow>
            <OrgAvatar>PE</OrgAvatar>
            <OrgName>Perceptum</OrgName>
            <ChevronsUpDown size={14} />
          </OrgRow>
          <SectionHead>
            Dashboards
            <Plus size={12} />
          </SectionHead>
          <NavItem>
            <LayoutDashboard size={15} />
            Main dashboard
          </NavItem>
          <Links>
            <LinkRow><Settings size={15} />Project settings</LinkRow>
            <LinkRow><BookOpen size={15} />Documentation</LinkRow>
            <LinkRow><Mail size={15} />Need help?</LinkRow>
            <LinkRow><MessageCircle size={15} />Join us on Discord</LinkRow>
          </Links>
          <Quota>
            <QuotaHead><span>Monthly Quota</span><span>0%</span></QuotaHead>
            <QuotaBar />
            <QuotaFoot>1.59K / 100M events</QuotaFoot>
          </Quota>
          <UserRow>
            <UserInitials>GD</UserInitials>
            <UserName>Gaëtan Dezeiraud</UserName>
            <ChevronsUpDown size={14} />
          </UserRow>
        </Sidebar>

        <Main>
          <TopRow>
            <TopCard>
              <TableTop />
              <TableRow><span>Poland</span><span>41</span></TableRow>
              <TableRow><span>Czechia</span><span>37</span></TableRow>
            </TopCard>
            <TopCard />
            <TopCard>
              <Brush>
                <Waveform />
                <BrushHandle />
              </Brush>
            </TopCard>
          </TopRow>

          <WorldCard>
            <CardHead>
              <CardTitle>Countries World Map</CardTitle>
              <CardActions />
            </CardHead>
            <MapBody>
              <WorldMap />
              <Legend>
                <LegendLabel>High</LegendLabel>
                <LegendBar>
                  <LegendThumb $top />
                  <LegendThumb />
                  <LegendValue $top>504</LegendValue>
                  <LegendValue>0</LegendValue>
                </LegendBar>
                <LegendLabel>Low</LegendLabel>
              </Legend>
            </MapBody>
          </WorldCard>

          <BottomRow>
            <BottomCard>
              <CardHead>
                <CardTitle>Sessions par pays</CardTitle>
                <CardActions />
              </CardHead>
              <ClippedChart width="1488" height="8">
                {LEGEND_DOTS.map(([x, fill]) => (
                  <rect key={x} x={x} y="3" width="3" height="5" fill={fill} />
                ))}
              </ClippedChart>
            </BottomCard>
            <BottomCard>
              <CardHead>
                <CardTitle>Secrets</CardTitle>
                <CardActions />
              </CardHead>
            </BottomCard>
          </BottomRow>

          <FilterBar>
            <GhostButton $w={41}><Funnel size={16} /></GhostButton>
            <RangeSelect>
              <Clock size={15} />
              <RangeText>Last 7 days</RangeText>
              <ChevronDown size={14} />
            </RangeSelect>
            <GhostButton $w={36} $light><RefreshCw size={15} /></GhostButton>
            <SplitButton>
              <SplitPart><Plus size={15} /></SplitPart>
              <SplitPart><ChevronDown size={15} /></SplitPart>
            </SplitButton>
          </FilterBar>
        </Main>
        <ScrollRail />
      </AppWindow>
    </Page>
  );
}
